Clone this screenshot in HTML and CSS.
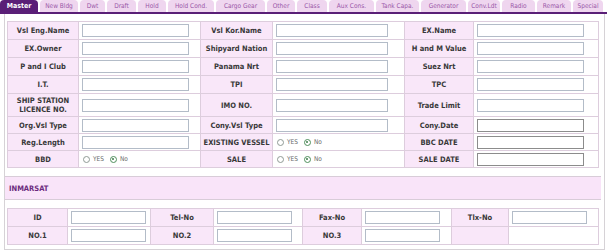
FILE: index.html
```html
<!DOCTYPE html>
<html>
<head>
<meta charset="utf-8">
<link rel="stylesheet" href="styles.css">
</head>
<body>
<div class="tabs">
  <span class="tab active">Master</span>
  <span class="tab">New Bldg</span>
  <span class="tab">Dwt</span>
  <span class="tab">Draft</span>
  <span class="tab">Hold</span>
  <span class="tab">Hold Cond.</span>
  <span class="tab">Cargo Gear</span>
  <span class="tab">Other</span>
  <span class="tab">Class</span>
  <span class="tab">Aux Cons.</span>
  <span class="tab">Tank Capa.</span>
  <span class="tab">Generator</span>
  <span class="tab">Conv.Ldt</span>
  <span class="tab">Radio</span>
  <span class="tab">Remark</span>
  <span class="tab">Special</span>
</div>
<div class="panel">
  <table class="grid main">
    <colgroup><col class="c1"><col class="c2"><col class="c3"><col class="c4"><col class="c5"><col class="c6"></colgroup>
    <tr class="r18">
      <th>Vsl Eng.Name</th><td><input class="inp" type="text"></td>
      <th>Vsl Kor.Name</th><td><input class="inp wide" type="text"></td>
      <th>EX.Name</th><td><input class="inp" type="text"></td>
    </tr>
    <tr class="r18">
      <th>EX.Owner</th><td><input class="inp" type="text"></td>
      <th>Shipyard Nation</th><td><input class="inp wide" type="text"></td>
      <th>H and M Value</th><td><input class="inp" type="text"></td>
    </tr>
    <tr class="r18">
      <th>P and I Club</th><td><input class="inp" type="text"></td>
      <th>Panama Nrt</th><td><input class="inp wide" type="text"></td>
      <th>Suez Nrt</th><td><input class="inp" type="text"></td>
    </tr>
    <tr class="r18">
      <th>I.T.</th><td><input class="inp" type="text"></td>
      <th>TPI</th><td><input class="inp wide" type="text"></td>
      <th>TPC</th><td><input class="inp" type="text"></td>
    </tr>
    <tr class="r23">
      <th>SHIP STATION<br>LICENCE NO.</th><td><input class="inp" type="text"></td>
      <th>IMO NO.</th><td><input class="inp wide" type="text"></td>
      <th>Trade Limit</th><td><input class="inp" type="text"></td>
    </tr>
    <tr class="r17">
      <th>Org.Vsl Type</th><td><input class="inp" type="text"></td>
      <th>Cony.Vsl Type</th><td><input class="inp wide" type="text"></td>
      <th>Cony.Date</th><td><input class="inp dark" type="text"></td>
    </tr>
    <tr class="r17">
      <th>Reg.Length</th><td><input class="inp" type="text"></td>
      <th>EXISTING VESSEL</th>
      <td><div class="radios"><span class="radio"></span><span class="rl">YES</span><span class="radio on"></span><span class="rl">No</span></div></td>
      <th>BBC DATE</th><td><input class="inp dark" type="text"></td>
    </tr>
    <tr class="r17">
      <th>BBD</th>
      <td><div class="radios"><span class="radio"></span><span class="rl">YES</span><span class="radio on"></span><span class="rl">No</span></div></td>
      <th>SALE</th>
      <td><div class="radios"><span class="radio"></span><span class="rl">YES</span><span class="radio on"></span><span class="rl">No</span></div></td>
      <th>SALE DATE</th><td><input class="inp dark" type="text"></td>
    </tr>
  </table>

  <div class="section">INMARSAT</div>

  <table class="grid sub">
    <colgroup><col class="s1"><col class="s2"><col class="s3"><col class="s4"><col class="s5"><col class="s6"><col class="s7"><col class="s8"></colgroup>
    <tr class="r18">
      <th>ID</th><td><input class="inp small" type="text"></td>
      <th>Tel-No</th><td><input class="inp small" type="text"></td>
      <th>Fax-No</th><td><input class="inp small" type="text"></td>
      <th>Tlx-No</th><td><input class="inp small" type="text"></td>
    </tr>
    <tr class="r18">
      <th>NO.1</th><td><input class="inp small" type="text"></td>
      <th>NO.2</th><td><input class="inp small" type="text"></td>
      <th>NO.3</th><td><input class="inp small" type="text"></td>
      <th></th><td></td>
    </tr>
  </table>
</div>
</body>
</html>
```
FILE: styles.css
```css
html, body {
  margin: 0;
  padding: 0;
  background: #ffffff;
}
body {
  font-family: "DejaVu Sans Condensed", "DejaVu Sans", sans-serif;
  font-size: 7.5px;
  color: #333333;
  width: 607px;
}

.tabs {
  display: grid;
  grid-template-columns: 38px 38px 25px 29px 28px 46px 49px 28px 30px 45px 43px 45px 32px 33px 34px 30px;
  column-gap: 2px;
  height: 12px;
  border-bottom: 2px solid #5a1f77;
}
.tab {
  display: flex;
  align-items: center;
  justify-content: center;
  background: #efd6ef;
  color: #9a56a8;
  font-size: 6.5px;
  border-radius: 4px 4px 0 0;
  white-space: nowrap;
  overflow: hidden;
}
.tab.active {
  background: #5a1f77;
  color: #ffffff;
  font-weight: bold;
  font-size: 7px;
}

.panel {
  margin-left: 4px;
  width: 601px;
  box-sizing: border-box;
  border: 1px solid #d6d2d6;
  border-top: none;
  padding: 7px 6px 4px 2px;
}

.grid {
  border-collapse: collapse;
  table-layout: fixed;
  width: 591px;
}
.grid th, .grid td {
  border: 1px solid #ddcddd;
  padding: 0;
}
.grid th {
  background: #f9e7f9;
  font-weight: bold;
  color: #383838;
  text-align: center;
  line-height: 9px;
}
.grid td {
  background: #ffffff;
}

.r18 { height: 18px; }
.r17 { height: 17px; }
.r23 { height: 23px; }

.c1 { width: 71px; }
.c2 { width: 122px; }
.c3 { width: 72px; }
.c4 { width: 132px; }
.c5 { width: 69px; }
.c6 { width: 125px; }

.s1 { width: 60px; }
.s2 { width: 83px; }
.s3 { width: 63px; }
.s4 { width: 89px; }
.s5 { width: 59px; }
.s6 { width: 90px; }
.s7 { width: 57px; }
.s8 { width: 90px; }

.inp {
  display: block;
  box-sizing: border-box;
  width: 107px;
  height: 13px;
  margin: 0 0 0 3px;
  padding: 0;
  border: 1px solid #b3bcc8;
  background: #ffffff;
  font: inherit;
}
.inp.wide { width: 112px; }
.inp.small { width: 75px; }
.inp.dark { border-color: #8c8c8c; }

.radios {
  display: flex;
  align-items: center;
  margin-left: 4px;
  font-size: 6.5px;
  color: #6a6a6a;
}
.radio {
  box-sizing: border-box;
  width: 7px;
  height: 7px;
  border: 1px solid #8f9a95;
  border-radius: 50%;
  background: #ffffff;
  margin-right: 3px;
  position: relative;
}
.radio.on {
  border-color: #4f8f5c;
}
.radio.on::after {
  content: "";
  position: absolute;
  left: 1.5px;
  top: 1.5px;
  width: 2px;
  height: 2px;
  border-radius: 50%;
  background: #3d7d4a;
}
.rl { margin-right: 6px; }

.section {
  margin: 8px -3px 8px -2px;
  height: 24px;
  box-sizing: border-box;
  background: #f9e4f9;
  border-top: 1px solid #d8ccd8;
  border-bottom: 1px solid #d8ccd8;
  display: flex;
  align-items: center;
  padding-left: 4px;
  color: #6b2a7d;
  font-weight: bold;
}
```
